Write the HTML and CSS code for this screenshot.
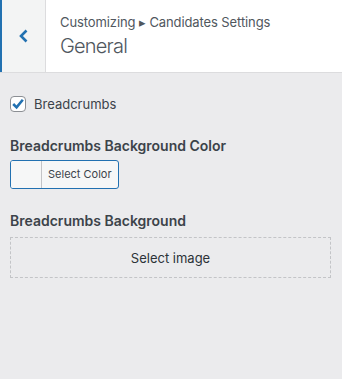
FILE: index.html
```html
<!DOCTYPE html>
<html lang="en">
<head>
    <meta charset="UTF-8">
    <title>Customizing General</title>
    <link rel="stylesheet" href="styles.css">
</head>
<body>
    <div class="panel-header">
        <button class="back-button" aria-label="Back">
            <svg width="12" height="16" viewBox="0 0 12 16"><path d="M8.5 2.5 L3 8 L8.5 13.5" fill="none" stroke="#2271b1" stroke-width="2.6"/></svg>
        </button>
        <div class="panel-title">
            <span class="crumbs">Customizing &#9656; Candidates Settings</span>
            <h3>General</h3>
        </div>
    </div>
    <div class="panel-body">
        <label class="check-row">
            <span class="checkbox">
                <svg width="14" height="14" viewBox="0 0 14 14"><path d="M2.2 7 L5.6 10.4 L11.8 2.8" fill="none" stroke="#2271b1" stroke-width="2.6"/></svg>
            </span>
            Breadcrumbs
        </label>
        <div class="control color-control">
            <span class="control-title">Breadcrumbs Background Color</span>
            <button class="color-button">
                <span class="swatch"></span>
                <span class="color-text">Select Color</span>
            </button>
        </div>
        <div class="control image-control">
            <span class="control-title">Breadcrumbs Background</span>
            <button class="image-button">Select image</button>
        </div>
    </div>
</body>
</html>
```

FILE: styles.css
```css
body {
    margin: 0;
    font-family: Inter, "Noto Sans", sans-serif;
    background-color: #ebebed;
    color: #3c434a;
}
.panel-header {
    display: flex;
    height: 72px;
    background-color: white;
    border-bottom: 1px solid #dcdcde;
}
.back-button {
    width: 46px;
    padding: 0;
    border: none;
    border-left: 2px solid #2271b1;
    border-right: 1px solid #dcdcde;
    background-color: #f3f4f4;
    display: flex;
    align-items: center;
    justify-content: center;
}
.panel-title {
    padding: 14px 0 0 14px;
}
.crumbs {
    display: block;
    font-size: 13px;
    color: #50575e;
    letter-spacing: -0.1px;
}
.panel-title h3 {
    margin: 4px 0 0;
    font-size: 20px;
    font-weight: 300;
    color: #50575e;
    letter-spacing: -0.8px;
}
.panel-body {
    padding: 23px 11px 0 10px;
}
.check-row {
    display: flex;
    align-items: center;
    gap: 8px;
    font-size: 13px;
    color: #3c434a;
}
.checkbox {
    width: 14px;
    height: 14px;
    border: 1px solid #8c8f94;
    border-radius: 4px;
    background-color: white;
    display: flex;
    align-items: center;
    justify-content: center;
}
.color-control {
    margin-top: 25px;
}
.image-control {
    margin-top: 23px;
}
.control-title {
    display: block;
    font-size: 14px;
    font-weight: 600;
    color: #3c434a;
    margin-bottom: 8px;
}
.color-control .control-title {
    margin-bottom: 6px;
}
.color-button {
    display: flex;
    height: 29px;
    padding: 0;
    border: 1px solid #2271b1;
    border-radius: 3px;
    background-color: #f6f7f7;
    overflow: hidden;
    font-family: inherit;
}
.swatch {
    width: 30px;
    height: 100%;
    border-right: 1px solid #c3c4c7;
    background-color: #f6f7f7;
}
.color-text {
    padding: 0 6px;
    font-size: 11px;
    line-height: 27px;
    color: #3c434a;
}
.image-button {
    width: 100%;
    height: 41px;
    border: 1px dashed #c3c4c7;
    background: none;
    font-family: inherit;
    font-size: 13px;
    color: #2c3338;
}
```
